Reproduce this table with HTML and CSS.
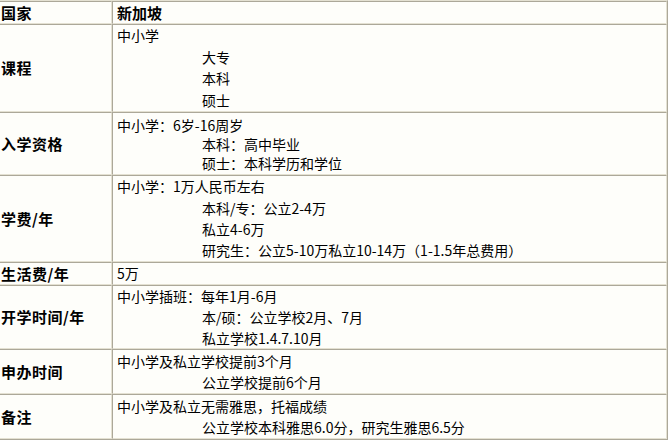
FILE: index.html
```html
<!DOCTYPE html>
<html lang="zh-CN">
<head>
<meta charset="utf-8">
<title>新加坡留学</title>
<link rel="stylesheet" href="styles.css">
</head>
<body>
<table class="info">
  <tr class="r1">
    <td class="label">国家</td>
    <td class="content head">新加坡</td>
  </tr>
  <tr class="r2">
    <td class="label">课程</td>
    <td class="content">
      <div class="ln">中小学</div>
      <div class="ln ind">大专</div>
      <div class="ln ind">本科</div>
      <div class="ln ind">硕士</div>
    </td>
  </tr>
  <tr class="r3">
    <td class="label">入学资格</td>
    <td class="content">
      <div class="ln">中小学：6岁-16周岁</div>
      <div class="ln ind">本科：高中毕业</div>
      <div class="ln ind">硕士：本科学历和学位</div>
    </td>
  </tr>
  <tr class="r4">
    <td class="label">学费/年</td>
    <td class="content">
      <div class="ln">中小学：1万人民币左右</div>
      <div class="ln ind">本科/专：公立2-4万</div>
      <div class="ln ind">私立4-6万</div>
      <div class="ln ind">研究生：公立5-10万私立10-14万（1-1.5年总费用）</div>
    </td>
  </tr>
  <tr class="r5">
    <td class="label">生活费/年</td>
    <td class="content">
      <div class="ln">5万</div>
    </td>
  </tr>
  <tr class="r6">
    <td class="label">开学时间/年</td>
    <td class="content">
      <div class="ln">中小学插班：每年1月-6月</div>
      <div class="ln ind">本/硕：公立学校2月、7月</div>
      <div class="ln ind">私立学校1.4.7.10月</div>
    </td>
  </tr>
  <tr class="r7">
    <td class="label">申办时间</td>
    <td class="content">
      <div class="ln">中小学及私立学校提前3个月</div>
      <div class="ln ind">公立学校提前6个月</div>
    </td>
  </tr>
  <tr class="r8">
    <td class="label">备注</td>
    <td class="content">
      <div class="ln">中小学及私立无需雅思，托福成绩</div>
      <div class="ln ind">公立学校本科雅思6.0分，研究生雅思6.5分</div>
    </td>
  </tr>
</table>
</body>
</html>
```

FILE: styles.css
```css
html, body {
  margin: 0;
  padding: 0;
  background: #ffffff;
}

body {
  font-family: "Noto Sans CJK SC", "Noto Sans", sans-serif;
  color: #000000;
  overflow: hidden;
}

.info {
  margin: 0 0 0 -2px;
  width: 670px;
  table-layout: fixed;
  border-collapse: separate;
  border-spacing: 0;
  border: 1px solid;
  border-color: #e4e1d2 #aca899 #aca899 #e4e1d2;
  background: #fefefa;
}

.info td {
  border: 1px solid;
  border-color: #aca899 #e4e1d2 #e4e1d2 #aca899;
  padding: 0;
}

.info .label {
  width: 110px;
  padding-left: 1px;
  font-size: 15px;
  line-height: 20px;
  font-weight: bold;
  vertical-align: middle;
  white-space: nowrap;
  letter-spacing: 0.5px;
}

.info .content {
  padding-left: 4px;
  font-size: 14px;
  vertical-align: top;
  white-space: nowrap;
}

.info .content.head {
  font-size: 15px;
  font-weight: bold;
  vertical-align: middle;
}

.ln {
  overflow: hidden;
}

.ind {
  padding-left: 85px;
}

.r1 td {
  height: 20px;
}

.r2 td { height: 86px; }
.r2 .ln { height: 21.5px; line-height: 21.5px; }

.r3 td { height: 61px; }
.r3 .content { padding-top: 3px; height: 57px; padding-bottom: 1px; }
.r3 .ln { height: 19px; line-height: 19px; }

.r4 td { height: 85px; }
.r4 .ln { height: 21px; line-height: 21px; }
.r4 .ln:nth-child(2) { height: 22px; line-height: 22px; }

.r5 td { height: 21px; }
.r5 .ln { height: 21px; line-height: 21px; }

.r6 td { height: 62px; }
.r6 .ln { height: 21px; line-height: 21px; }
.r6 .ln:last-child { height: 20px; line-height: 20px; }

.r7 td,
.r8 td { height: 43px; }
.r7 .ln,
.r8 .ln { height: 22px; line-height: 22px; }
.r7 .ln:last-child,
.r8 .ln:last-child { height: 21px; line-height: 21px; }
```
